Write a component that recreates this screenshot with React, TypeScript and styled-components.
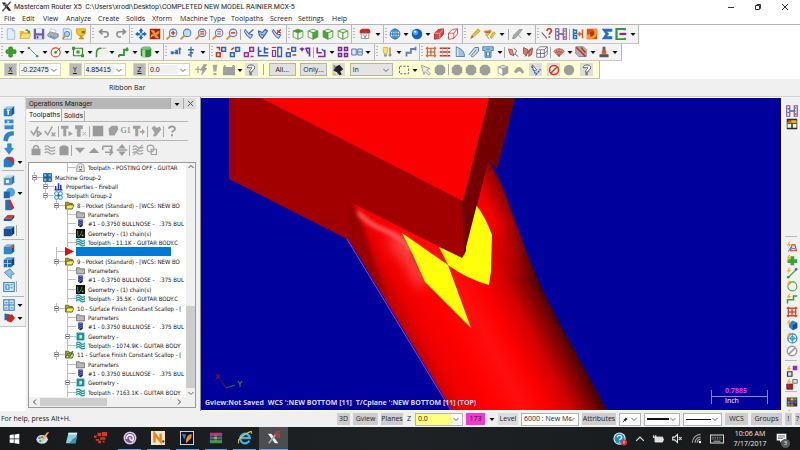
import React from "react";
import styled, { createGlobalStyle } from "styled-components";

const UI = '"Open Sans", "Noto Sans", sans-serif';
const TAHOMA = '"DejaVu Sans Condensed", "DejaVu Sans", sans-serif';

const GlobalStyle = createGlobalStyle`
  *, *::before, *::after { box-sizing: border-box; }
  body { margin: 0; background: #fff; font-family: ${UI}; font-size: 7px; line-height: 10px; color: #222; }
  button, input, select { font: inherit; color: inherit; margin: 0; padding: 0; border: 0; border-radius: 0; background: none; }
  ul { list-style: none; margin: 0; padding: 0; }
`;

/* ---------- icon artwork, drawn on a 16 x 16 grid ---------- */

const magnifier = (lens: string, mark: React.ReactNode) => (
  <>
    <path d="M6 10 1.500 14.500" stroke="#e0952a" strokeWidth="2.600" strokeLinecap="round" />
    <circle cx="9.500" cy="6.500" r="5" fill={lens} stroke="#5f7fae" strokeWidth="1.400" />
    {mark}
  </>
);

const wireCube = (top: string, front: string, side: string, line: string) => (
  <g stroke={line} strokeWidth="1.100" strokeLinejoin="round">
    <path d="M1.500 4 8 1.500 14.500 4 8 6.500z" fill={top} />
    <path d="M1.500 4 8 6.500V15L1.500 12z" fill={front} />
    <path d="M14.500 4 8 6.500V15l6.500-3z" fill={side} />
  </g>
);

const solidCube = (a: string, b: string, c: string) => (
  <>
    <path d="M1 5 5 1.500h10L11 5z" fill={a} />
    <path d="M1 5h10v10H1z" fill={b} />
    <path d="M11 5l4-3.500V11l-4 4z" fill={c} />
  </>
);

const blocks = (a: string, b: string, extra: string) => (
  <>
    <path d="M2 9h5v5H2z" fill="none" stroke={a} strokeWidth="2" />
    <path d="M9 2h5v5H9z" fill="none" stroke={b} strokeWidth="2" />
    <path d={extra} fill="none" stroke="#d0321c" strokeWidth="2" />
  </>
);

const spark = <path d="M4 1 1 6h3L2 10l5-6H4l2-3z" fill="#f2b01e" />;

const art: Record<string, React.ReactNode> = {
  app: (
    <>
      <path d="M1 2h5l9 12h-4z" fill="#222" />
      <path d="M14 1 2 15" stroke="#555" strokeWidth="2" />
      <path d="M3 7l4-5 2 4z" fill="#777" />
    </>
  ),
  newFile: <path d="M3 1h7l3 3v11H3z M10 1v3h3" fill="#dcefff" stroke="#8fb0d2" />,
  open: (
    <>
      <path d="M1 4h5l1 2h7v8H1z" fill="#e7b72c" />
      <path d="M4 7h12l-3 7H1z" fill="#ffe066" stroke="#b98d17" strokeWidth=".6" />
      <path d="M8 4c1-3 4-3 5 0l1.500-1v4H11l1-1.500C11 3.500 9.500 3.500 8 4z" fill="#3e9a35" />
    </>
  ),
  save: (
    <>
      <path d="M1 1h14v14H1z" fill="#6a5fc0" />
      <path d="M4 1h8v6H4z" fill="#eeeefa" />
      <path d="M4 10h8v5H4z" fill="#d8d8ee" />
      <path d="M5 11h2v3H5z" fill="#40388a" />
    </>
  ),
  print: (
    <>
      <path d="M5 1l7 2-1 5-8-2z" fill="#fff" stroke="#8aa" strokeWidth=".7" />
      <path d="M1 8l4-3 10 3v4l-5 3-9-4z" fill="#a5afb9" stroke="#667" strokeWidth=".7" />
      <path d="M4 11l7 2" stroke="#5b90c9" strokeWidth="1.500" />
    </>
  ),
  preview: (
    <>
      <path d="M3 1h8l3 3v11H3z" fill="#dcecfb" stroke="#7f9fc2" />
      <circle cx="8" cy="8" r="3.500" fill="#a9d3f7" stroke="#4f7fb5" strokeWidth="1.200" />
      <path d="M5 11l-3 4" stroke="#cf8a2c" strokeWidth="2" />
    </>
  ),
  trophy: (
    <>
      <path d="M2 1h12v4c0 4-3 5-5 6H7C5 10 2 9 2 5z" fill="#f6c50e" stroke="#a87a05" strokeWidth=".7" />
      <path d="M7 10h3v3h2v2H5v-2h2z" fill="#c99207" />
      <path d="M9 4h4v3H9z" fill="#8a6408" />
    </>
  ),
  undo: <path d="M3 5h7a3.500 3.500 0 010 7H8M6 1.500 2 5l4 3.500" fill="none" stroke="#8d8d8d" strokeWidth="2.200" />,
  redo: <path d="M13 5H6a3.500 3.500 0 000 7h2M10 1.500 14 5l-4 3.500" fill="none" stroke="#8d8d8d" strokeWidth="2.200" />,
  pan: (
    <>
      <path d="M8 0l3 4H9.500v2.500H12V5l4 3-4 3V9.500H9.500V12H11l-3 4-3-4h1.500V9.500H4V11L0 8l4-3v1.500h2.500V4H5z" fill="#1668c9" />
      <circle cx="8" cy="8" r="2" fill="#8fd0ff" />
    </>
  ),
  repaint: (
    <>
      <path d="M1 1h14v14H1z" fill="#a6200e" />
      <path d="M2 3q6-2 6 4l6-4q0 6-4 6l4 5q-7 0-7-4l-5 3q0-6 4-5z" fill="#f39a20" />
    </>
  ),
  zoomIn: magnifier("#e8f1fb", <path d="M9.500 3.500v6M6.500 6.500h6" stroke="#c8321f" strokeWidth="1.800" />),
  zoomFit: magnifier("#b9def8", null),
  zoomRed: magnifier("#f3d7d5", <path d="M7 5h5M7 8h5" stroke="#c8321f" strokeWidth="1.600" />),
  zoomPct: magnifier("#eceef6", <path d="M7 5h5M7 8h5" stroke="#b04a77" strokeWidth="1.300" />),
  zoomOut: magnifier("#f6e6e1", <path d="M6.500 6.500h6" stroke="#c8321f" strokeWidth="1.800" />),
  rotate: (
    <>
      <path d="M3 2l5 6 5 1-3 5-4-3-4-6z" fill="#b7cfea" stroke="#3a5f97" strokeWidth="1.300" />
      <path d="M8 7l6-5" stroke="#3a5f97" strokeWidth="1.500" />
    </>
  ),
  rotateAll: (
    <>
      <path d="M2 4l5 2 4-4 3 2-4 6-3 4-4-4z" fill="#9fc0e4" stroke="#2f568f" strokeWidth="1.400" />
      <path d="M5 8l5 2" stroke="#2f568f" />
    </>
  ),
  rotateOff: (
    <>
      <path d="M3 2l5 6 5 1-3 5-4-3-4-6z" fill="#b7cfea" stroke="#3a5f97" strokeWidth="1.300" />
      <path d="M8 7l5-5M8 3l5 4" stroke="#c8321f" strokeWidth="1.800" />
    </>
  ),
  cubeTop: wireCube("#3f9a2c", "#eef8ea", "#eef8ea", "#4f9a3c"),
  cubeFront: wireCube("#eef8ea", "#eef8ea", "#4fa13a", "#4f9a3c"),
  cubeRight: wireCube("#eef8ea", "#4fa13a", "#eef8ea", "#4f9a3c"),
  cubeIso: wireCube("#eef8ea", "#eef8ea", "#eef8ea", "#4f9a3c"),
  gview: (
    <>
      <path d="M1 3l3-2h9l2 2v4H1z" fill="#c92b2b" />
      <path d="M3 7h10v7H3z" fill="#fff" stroke="#777" />
      <path d="M6 9l2 4 2-4" fill="none" stroke="#c92b2b" />
    </>
  ),
  globe: (
    <g fill="none" stroke="#2272b8" strokeWidth="1.300">
      <circle cx="8" cy="8" r="6.500" fill="#e2f1fb" />
      <ellipse cx="8" cy="8" rx="3" ry="6.500" />
      <path d="M1.500 8h13M3 4h10M3 12h10M8 1v14" />
    </g>
  ),
  sphere: (
    <>
      <circle cx="8" cy="8" r="7" fill="#1260b8" />
      <circle cx="6" cy="6" r="3.500" fill="#4f9fe8" />
      <circle cx="5.500" cy="5" r="1.500" fill="#d3ecff" />
    </>
  ),
  redSolid: (
    <>
      <path d="M2 7l5-5 7-1v7l-5 6-7 1z" fill="#dd4545" stroke="#a81d1d" />
      <path d="M2 7h7v7M9 7l5-6" fill="none" stroke="#ffc6c6" />
    </>
  ),
  redWire: <path d="M2 7l5-5 7-1v7l-5 6-7 1zM2 7h7v7M9 7l5-6" fill="#fff4f4" stroke="#d04848" strokeWidth="1.200" />,
  pencil: (
    <>
      <path d="M2 14l2-4 8-9 3 3-9 8z" fill="#eac528" stroke="#a3780a" strokeWidth=".7" />
      <path d="M2 14l2-4 2 2z" fill="#c4571a" />
    </>
  ),
  pencils: (
    <>
      <path d="M2 9l6-7 2 2-6 7zM8 12l5-7 2 2-5 7z" fill="#eac528" stroke="#a3780a" strokeWidth=".7" />
      <path d="M1 4h7v2H1zM4 11l3 4" stroke="#c4571a" fill="#d69a1a" />
    </>
  ),
  eraser: <path d="M2 14l2-5 7-7h4l-6 8-4 4zM10 9l3 4" fill="#aaa" stroke="#8a8a8a" />,
  query: (
    <>
      <path d="M1 6l7 8" stroke="#555" strokeWidth="1.500" />
      <path d="M8 4c0-4 6-4 6 0 0 2-3 2-3 5M11 11v2" fill="none" stroke="#dc3a20" strokeWidth="2.300" />
    </>
  ),
  levels: (
    <>
      <path d="M1 1h4v14H1zM11 1h4v14h-4z" fill="#fff" stroke="#8045a8" strokeWidth="1.500" />
      <path d="M12 3h2v2h-2z" fill="#3aa83a" /><path d="M12 7h2v2h-2z" fill="#e3a220" /><path d="M12 11h2v2h-2z" fill="#d0321c" />
      <path d="M2 5h2M2 10h2M5 8h6" stroke="#2f6fc0" strokeWidth="2" />
    </>
  ),
  analyze: (
    <>
      <path d="M2 1v14M2 3h4v4H2M2 10h4v4H2" fill="none" stroke="#1f74c8" strokeWidth="2" />
      <path d="M7 8h6M14 2v12M10 5v6" stroke="#e8641c" strokeWidth="2.200" />
    </>
  ),
  ramp: (
    <>
      <path d="M1 1h14v14H1z" fill="#e0500f" />
      <path d="M1 15V9q7 0 9-8h5v6q-2 7-8 8z" fill="#f79a2c" />
      <path d="M5 6l6-3v6l-5 3z" fill="#b93208" />
    </>
  ),
  sigma: <path d="M1 1h14v4H8l3 3-3 3h7v4H1l5-7z" fill="#1e6fc6" />,
  convert: (
    <>
      <path d="M13 3V1H2v14h11v-2" fill="none" stroke="#37963a" strokeWidth="3" />
      <path d="M6 8h9" stroke="#7b2b93" strokeWidth="3" />
    </>
  ),
  plus: <path d="M5 2q3-2 5 0v3h4q2 3 0 5h-4v4q-3 2-5 0v-4H2Q0 8 2 5h3z" fill="#3aa02c" stroke="#1f7a18" strokeWidth=".8" />,
  line: (
    <>
      <path d="M2 2l12 12" stroke="#6d8f9f" strokeWidth="1.300" />
      <circle cx="2.500" cy="2.500" r="1.600" fill="#3a9a33" /><circle cx="13.500" cy="13.500" r="1.600" fill="#3a9a33" />
    </>
  ),
  circle: (
    <>
      <circle cx="7.500" cy="8.500" r="6" fill="none" stroke="#d24a2b" strokeWidth="1.500" />
      <path d="M7.500 8.500 14 2" stroke="#d24a2b" strokeWidth="1.300" />
      <circle cx="7.500" cy="8.500" r="1.800" fill="#2f9a2b" />
    </>
  ),
  rect: (
    <>
      <path d="M2 3h12v10H2z" fill="none" stroke="#2f8f2b" strokeWidth="1.500" />
      <path d="M0 1h4v4H0zM12 11h4v4h-4zM6 6h4v4H6z" fill="#2f9a2b" />
    </>
  ),
  fillet: (
    <>
      <path d="M2 15V9q0-6 6-6" fill="none" stroke="#2f9a2b" strokeWidth="2" />
      <path d="M8 3h7" stroke="#888" strokeWidth="1.300" strokeDasharray="2 1" />
    </>
  ),
  spline: <path d="M1 12h7V5h6M1 12v3M12 2v5" fill="none" stroke="#2f9a2b" strokeWidth="2.400" />,
  prism: (
    <>
      <path d="M1 3l4-2h8l2 2v10l-3 2H4l-3-2z" fill="#2e8b34" />
      <path d="M3 5h4v10H3z" fill="#a5dca0" />
      <path d="M1 3l4-2h8l2 2-3 2H3z" fill="#7cc47c" />
    </>
  ),
  drafting: (
    <>
      <path d="M1 7h4v4H1zM7 5h4v6H7z" fill="#2f72bb" />
      <path d="M5 9h3M13 2v9M11 4h4" stroke="#31568c" strokeWidth="1.600" />
    </>
  ),
  dimension: <path d="M8 1v14M4 5h8M6 9h5M4 12h3" stroke="#3b6db2" strokeWidth="1.800" fill="none" />,
  xfA: blocks("#d0321c", "#2b62c4", "M2 2h4v4"),
  xfB: blocks("#2b62c4", "#2b62c4", "M3 5l4-3"),
  xfC: blocks("#9b2aa0", "#9b2aa0", "M10 14h4"),
  xfD: <path d="M2 1v13M1 7h5M1 13h14M10 1v8h5M10 4h5" fill="none" stroke="#3454c0" strokeWidth="2" />,
  xfE: (
    <>
      <path d="M9 2h5v12H9z" fill="none" stroke="#2b62c4" strokeWidth="1.800" />
      <path d="M2 6h4v8H2z" fill="none" stroke="#a02a90" strokeWidth="1.600" />
      <path d="M1 2h6" stroke="#d0321c" strokeWidth="1.500" />
    </>
  ),
  xfF: blocks("#2b62c4", "#2b62c4", "M10 12h5M3 4h3"),
  xfG: <path d="M1 4h6M4 2v5M9 3h5v11M9 3l3 7" fill="none" stroke="#6a2bb0" strokeWidth="2.200" />,
  xfH: (
    <>
      <path d="M3 2v7h6M13 5v9H4" fill="none" stroke="#8a2aa8" strokeWidth="2.200" />
      <path d="M9 4l4 4" stroke="#2b62c4" strokeWidth="1.500" />
    </>
  ),
  xfI: <path d="M2 2h4v4H2zM10 2h4v4h-4zM2 10h4v4H2zM10 10h4v4h-4z" fill="none" stroke="#7a2090" strokeWidth="2" />,
  xfJ: <path d="M1 4h6v8H1zM9 8h6M9 4h6v8H9z" fill="#dfe9f8" stroke="#4a77b5" strokeWidth="1.300" />,
  bulb: (
    <>
      <path d="M3 2h6v6L8 10H4L3 8z" fill="#fbe25a" stroke="#c8a21c" strokeWidth=".8" />
      <path d="M4 11h4v3H4z" fill="#999" />
      <path d="M12 2v12M10 12h4" stroke="#7a6f3a" strokeWidth="1.500" />
    </>
  ),
  bend: <path d="M2 14V9h6V4h6M14 1v5" fill="none" stroke="#6f78b5" strokeWidth="2.400" />,
  mesh: <path d="M3 1v14M13 1v14M1 3h14M1 13h14M8 3v10M3 8h10" fill="none" stroke="#d2581e" strokeWidth="1.500" />,
  meshRows: (
    <>
      <path d="M1 3h14M1 8h14M1 13h14" stroke="#c22c20" strokeWidth="1.700" />
      <path d="M5 1v14M11 1v14" stroke="#c8a38c" strokeWidth="1.400" />
    </>
  ),
  surf: (
    <>
      <path d="M3 1v13h4V3z" fill="#d6e8f7" stroke="#38699b" />
      <path d="M7 3q7 3 7 11H7" fill="#9cc5e6" stroke="#38699b" />
    </>
  ),
  sweep: <path d="M1 12 9 2h5v5L6 15 4 13l7-8" fill="#c8def2" stroke="#45729f" strokeWidth="1.200" />,
  boxSurf: (
    <>
      <path d="M1 1h14v5h-3v9H4V6H1z" fill="#9cc5e6" stroke="#2f5f90" />
      <path d="M5 4h6M6 8h4v5H6z" fill="#e8f4ff" stroke="#2f5f90" />
    </>
  ),
  trimSurf: (
    <>
      <path d="M2 4l5 1 2 8-5-2z" fill="#e2887c" stroke="#b5382b" />
      <path d="M9 3l4 3-3 6M11 11l4 3" fill="none" stroke="#666" strokeWidth="1.200" />
    </>
  ),
  trimSurf2: (
    <>
      <path d="M2 2l6 3-2 8-4-3zM9 6l5-3-1 8-4 3z" fill="#d77b6f" stroke="#a83327" />
      <path d="M4 14l9-12" stroke="#555" />
    </>
  ),
  wireBox: <path d="M1 5h10v10H1zM1 5l4-4h10L11 5M15 1v10l-4 4M6 5v10M1 10h10l4-4" fill="#fff" stroke="#556" />,
  fan: (
    <>
      <path d="M8 14 1 7q7-7 14 0z" fill="#e2a193" stroke="#a8382b" />
      <path d="M8 14V4M8 14 4 5M8 14l4-9M3 9q5-4 10 0" fill="none" stroke="#a8382b" strokeWidth=".8" />
    </>
  ),
  clipPlane: (
    <>
      <path d="M1 1h10l4 4v9H5l-4-4z" fill="#b9b1ae" stroke="#777" />
      <path d="M2 2l12 12M8 2l6 7" stroke="#b72e22" strokeWidth="2" />
    </>
  ),
  endmill: (
    <>
      <path d="M6 1h4v6H6z" fill="#666" />
      <path d="M5 6h6v5H5z" fill="#e05a28" />
      <path d="M2 11h12v4H2z" fill="#555" />
    </>
  ),
  fastPoint: <path d="M4 3v9M0 7h8M12 1 8 8h3l-2 6 6-8h-3l3-5z" fill="#a0a0a0" stroke="#a0a0a0" strokeWidth="1.600" />,
  bang: <path d="M5 1h6l-1 9H6zM6 12h4v3H6z" fill="#a8a8a8" />,
  wideTool: <path d="M0 5q1-4 3-4l1 3h8l1-3q3 0 3 4v10H0z" fill="#a0a0a0" />,
  help: (
    <>
      <path d="M3 5c0-5 10-5 10 0 0 3-4 3-4 6H6c0-4 3-4 3-6 0-1-2-1-2 0z" fill="#fff" stroke="#555" strokeWidth="1.300" />
      <path d="M6 12h3v3H6z" fill="#777" />
    </>
  ),
  pickCursor: (
    <>
      <path d="M2 1v9l3-2 3 6 3-1-3-6h4z" fill="#888" />
      <path d="M6 3l4-2 5 6-4 3 2 4-3 1-3-4-5-2z" fill="#222" />
      <path d="M1 12l4 3" stroke="#e2b53a" strokeWidth="2" />
    </>
  ),
  marquee: <path d="M2 3h12v10H2z" fill="none" stroke="#666" strokeWidth="1.300" strokeDasharray="3 2" />,
  arrowGrey: <path d="M2 2l11 4-4 2 5 5-2 2-5-5-2 4z" fill="#eee" stroke="#999" strokeWidth="1.200" />,
  hexagon: <path d="M5 1h6l4 4v6l-4 4H5l-4-4V5z" fill="#9d9d9d" />,
  halfCube: wireCube("#ddd", "#fff", "#a0a0a0", "#999"),
  chevronUp: <path d="M1 11q7-14 14 0l-3 2q-3-6-7-1z" fill="#a0a0a0" />,
  verify: (
    <>
      <path d="M2 3l6 11 6-7" fill="none" stroke="#2f62b0" strokeWidth="1.800" strokeDasharray="3 1" />
      <path d="M3 1l6 7-4 1z" fill="#fff" stroke="#555" />
    </>
  ),
  forbid: (
    <>
      <circle cx="8" cy="8" r="6" fill="#fbe9e6" stroke="#d23a22" strokeWidth="2" />
      <path d="M12 4 4 12" stroke="#d23a22" strokeWidth="2" />
    </>
  ),
  disc: <circle cx="8" cy="8" r="7" fill="#9d9d9d" />,
  /* left toolbar */
  extrude: (
    <>
      {solidCube("#8ccaf5", "#1f7fd0", "#1259a0")}
      <path d="M5 7h4M7 7v6" stroke="#fff" strokeWidth="2" />
    </>
  ),
  revolve: (
    <>
      <path d="M2 2h12v5H2zM2 9h12v6H2z" fill="#2f8bd8" />
      <path d="M3 7h9v3H3z" fill="#bfe2fb" /><path d="M6 3l3 2-3 2" fill="#fff" />
    </>
  ),
  sweepBlue: <path d="M1 14C1 6 5 2 14 2v5c-5 0-7 2-8 8z" fill="#2386d9" stroke="#1464ac" strokeWidth=".6" />,
  loft: <path d="M6 1h5v6h3l-6 8-6-8h4z" fill="#2a90e2" stroke="#1464ac" strokeWidth=".6" />,
  filletSolid: (
    <>
      <path d="M1 5l4-4h6q4 1 4 5v5l-4 4H1z" fill="#1f7fd0" />
      <path d="M5 2h5q5 0 5 6l-4 3q0-6-6-6z" fill="#d8281f" />
    </>
  ),
  shell: (
    <>
      {solidCube("#b4daf5", "#5aa5de", "#2b76b8")}
      <path d="M3 7h6v6H3z" fill="#e4f3fd" stroke="#1c5a94" />
    </>
  ),
  boolean: (
    <>
      <circle cx="10" cy="7" r="6" fill="#4da3e6" />
      <path d="M1 6h8v9H1z" fill="#1766b4" />
    </>
  ),
  draft: (
    <>
      <path d="M3 1h6l5 10-4 4H3z" fill="#1f70c2" />
      <path d="M7 1h3l5 11-4 3z" fill="#cf2d25" />
    </>
  ),
  thicken: (
    <>
      <path d="M1 9l5-5h9l-4 5z" fill="#d8392e" /><path d="M1 9h10v3H1z" fill="#1a5ca5" /><path d="M11 9l4-5v3l-4 5z" fill="#103f75" />
    </>
  ),
  block: solidCube("#4d9ade", "#154f97", "#0d376b"),
  extract: (
    <>
      {solidCube("#7bb9ea", "#2f86d3", "#175ca0")}
      <path d="M6 8l8-7v5z" fill="#e2572b" />
    </>
  ),
  gridBlock: (
    <>
      {solidCube("#5aa1df", "#1f66b0", "#12457e")}
      <path d="M6 5v10M1 10h10" stroke="#bfe0f8" />
    </>
  ),
  foldBlock: <path d="M2 6l7-5 6 7-4 1v5L5 9z" fill="#8cc3ee" stroke="#2f77b8" />,
  drawing: (
    <>
      <path d="M1 2h14v12H1z" fill="#d4eafa" stroke="#3b86c5" strokeWidth="1.500" />
      <path d="M4 5h4v6H4zM10 5h3M10 9h3" fill="none" stroke="#3b86c5" strokeWidth="1.500" />
    </>
  ),
  views: <path d="M1 1h14v14H1zM8 1v14M1 8h14M3 5h3M10 5h3M3 12h3M10 12h3" fill="#cfe6f8" stroke="#3b7db8" strokeWidth="1.400" />,
  redBlue: (
    <>
      <path d="M2 2l7 1 1 7-8 1z" fill="#2468b4" /><path d="M6 5l6-2 4 5-5 6-6-2z" fill="#d2241c" />
    </>
  ),
  /* right toolbar */
  colorMap: (
    <>
      <path d="M1 1h14v14H1z" fill="#2b2b2b" /><path d="M3 3h4v3H3z" fill="#e44b22" /><path d="M7 3h7v3H7z" fill="#f3c21a" />
      <path d="M2 8h5v5H2zM9 8h5v5H9z" fill="#f4f4d8" /><path d="M1 6h14v1H1z" fill="#f0e33a" />
    </>
  ),
  rOps: (
    <>
      {spark}
      <path d="M6 13l2-8h4l2 8z" fill="#f3d3d0" stroke="#d03a34" strokeWidth="1.400" />
      <path d="M3 14l5-8M8 10h5" stroke="#4a90c5" strokeWidth="1.500" />
    </>
  ),
  rPlus: (
    <>
      <path d="M6 3h5v4h4v5h-4v3H6v-3H2V7h4z" fill="#35a333" />
      {spark}
    </>
  ),
  rLine: (
    <>
      <path d="M3 14 14 3" stroke="#4f9a4c" strokeWidth="1.600" />
      {spark}
      <circle cx="13.500" cy="3" r="1.700" fill="#55a" /><circle cx="3" cy="13.500" r="1.700" fill="#3a9a33" />
    </>
  ),
  rCircle: (
    <>
      <circle cx="8.500" cy="8.500" r="6" fill="none" stroke="#4aa148" strokeWidth="1.400" />
      {spark}
    </>
  ),
  rSpline: (
    <>
      <path d="M2 14V9h8V4h5" fill="none" stroke="#3c9c3a" strokeWidth="2" />
      {spark}
    </>
  ),
  rMesh: <path d="M3 1v14M13 1v14M1 3h14M1 13h14M8 3v10M3 8h10" fill="#fff2e8" stroke="#dc4120" strokeWidth="1.700" />,
  rSolid: (
    <>
      <path d="M4 5l5-3 6 3v7l-6 3-5-4z" fill="#2f86d3" /><path d="M9 8l6-3v7l-6 3z" fill="#12508f" />
      {spark}
    </>
  ),
  rWheel: (
    <>
      <circle cx="8.500" cy="8.500" r="6" fill="#ddf0fb" stroke="#2f86c8" strokeWidth="1.600" />
      <circle cx="8.500" cy="8.500" r="2.500" fill="none" stroke="#2f86c8" strokeWidth="1.300" />
      <path d="M8.500 2v13M2 8.500h13" stroke="#2f86c8" />
      {spark}
    </>
  ),
  rForbid: (
    <>
      <circle cx="8" cy="8" r="6.300" fill="#f6f6f6" stroke="#999" strokeWidth="2" /><path d="M12.500 3.500l-9 9" stroke="#999" strokeWidth="2" />
    </>
  ),
  rSwapA: (
    <>
      <path d="M9 1h6v6H9z" fill="#8a2be2" /><path d="M2 9h6v6H2z" fill="#ddd" stroke="#333" strokeWidth="1.500" />
      {spark}
    </>
  ),
  rSwapB: (
    <>
      <path d="M9 2h6v5H9z" fill="#ddd" stroke="#555" /><path d="M1 8h8v7H1z" fill="#c4161c" stroke="#333" />
      {spark}
    </>
  ),
  palette: (
    <>
      <path d="M1 2h14v12H1z" fill="#333" /><path d="M2 3h3v3H2z" fill="#e33" /><path d="M6 3h4v3H6z" fill="#f5c518" /><path d="M11 3h3v3h-3z" fill="#2b8" />
      <path d="M2 7h3v3H2z" fill="#2bd" /><path d="M6 7h4v3H6z" fill="#d3b" /><path d="M11 7h3v3h-3z" fill="#36d" /><path d="M2 11h3v2H2z" fill="#6c3" />
      <path d="M6 11h4v2H6z" fill="#e73" />
    </>
  ),
  /* operations manager */
  selAll: <path d="M1 8l4 5 6-11M10 8v7l5-3.500z" fill="none" stroke="#a0a0a0" strokeWidth="2.200" />,
  selNone: <path d="M1 8l4 5 6-11M10 10l5 5M15 10l-5 5" fill="none" stroke="#a0a0a0" strokeWidth="2" />,
  regen: <path d="M0 1h10v4H7v10H3V5H0zM10 8l6 3.500-6 3.500z" fill="#a0a0a0" />,
  regenX: <path d="M0 1h10v4H7v10H3V5H0zM10 9l5 5M15 9l-5 5" fill="#a0a0a0" stroke="#a0a0a0" strokeWidth="1" />,
  square: <path d="M1 1h14v14H1z" fill="#9a9a9a" />,
  backplot: <path d="M2 5l4-4h8l1 5-5 8H3z" fill="#a0a0a0" />,
  postTool: <path d="M0 1h10v4H7v10H3V5H0zM9 8h3V5l4 4-4 4v-3H9z" fill="#a0a0a0" />,
  highFeed: <path d="M2 4l4-3 3 3 4-2 2 4-7 9H4l2-5z" fill="#a0a0a0" />,
  question: <path d="M4 5c0-4 8-4 8 0 0 3-4 3-4 5M8 12v3" fill="none" stroke="#9a9a9a" strokeWidth="2.400" />,
  lock: (
    <>
      <path d="M2 6h12v9H2z" fill="#9a9a9a" /><path d="M5 6V4q3-4 6 0v2" fill="none" stroke="#9a9a9a" strokeWidth="2" />
    </>
  ),
  waves: <path d="M1 4q3-3 6 0t8 0M1 8q3-3 6 0t8 0M1 12q3-3 6 0t8 0" fill="none" stroke="#a0a0a0" strokeWidth="1.600" />,
  ghost: <path d="M2 4q6-5 12 0v11H2z" fill="#9a9a9a" />,
  down: <path d="M1 5h14l-7 7z" fill="#9a9a9a" />,
  up: <path d="M1 12h14L8 5z" fill="#9a9a9a" />,
  insert: <path d="M1 3h12v8M4 11h9M10 7l4 4-4 4M1 3v5" fill="none" stroke="#9a9a9a" strokeWidth="2" />,
  scrollTo: <path d="M8 0l5 6H3zM8 16l5-6H3zM1 7h14v2H1z" fill="#9a9a9a" />,
  wavesOff: <path d="M1 4q3-3 6 0t8 0M1 8q3-3 6 0t8 0M1 12q3-3 6 0t8 0M2 15 14 1" fill="none" stroke="#a0a0a0" strokeWidth="1.500" />,
  rings: (
    <g fill="none" stroke="#a0a0a0" strokeWidth="1.500">
      <circle cx="6" cy="6" r="4.500" /><path d="M7 7h7v7H7z" />
    </g>
  ),
  /* tree */
  ghostIcon: (
    <>
      <path d="M2 4q6-6 12 0l1 11H1z" fill="#e5e5e5" stroke="#666" /><path d="M5 6h2v2H5zM9 6h2v2H9zM6 11h4v2H6z" fill="#333" />
    </>
  ),
  machine: (
    <>
      <path d="M1 1h6v6H1zM9 1h6v6H9zM1 9h6v6H1zM9 9h6v6H9z" fill="#5cc0ee" stroke="#124e93" strokeWidth="1.500" />
      <path d="M8 0v16M0 8h16" stroke="#123" strokeWidth="1" />
    </>
  ),
  props: <path d="M1 14h14M3 14V7M8 14V2M12 14V5" stroke="#1f2fc0" strokeWidth="2.600" />,
  group: (
    <>
      <path d="M4.500 1a3.500 3.500 0 010 7 3.500 3.500 0 010-7zM11.500 1a3.500 3.500 0 010 7 3.500 3.500 0 010-7zM4.500 8a3.500 3.500 0 010 7 3.500 3.500 0 010-7zM11.500 8a3.500 3.500 0 010 7 3.500 3.500 0 010-7z" fill="#d6f1fb" stroke="#2a86bd" strokeWidth="1.600" />
      <circle cx="8" cy="8" r="1.500" fill="#124e93" />
    </>
  ),
  folderOpen: (
    <>
      <path d="M1 2h5l1 2h6v10H1z" fill="#b8a21a" stroke="#222" /><path d="M4 7h12l-3 7H1z" fill="#fff23a" stroke="#222" />
    </>
  ),
  folderCheck: (
    <>
      <path d="M1 2h5l1 2h6v10H1z" fill="#b8a21a" stroke="#222" /><path d="M4 7h12l-3 7H1z" fill="#e9e03a" stroke="#222" />
      <path d="M4 7l4 5 6-10" fill="none" stroke="#1d8a8a" strokeWidth="2.500" />
    </>
  ),
  folder: <path d="M1 3h5l1 2h8v9H1z" fill="#b9b9b9" stroke="#555" strokeWidth="1.200" />,
  tool: (
    <>
      <path d="M4 1h8v10q-4 7-8 0z" fill="#161a8c" /><path d="M5 4l6-2M5 8l6-3M5 12l6-4" stroke="#c9d1ff" strokeWidth="1" />
    </>
  ),
  geometry: (
    <>
      <path d="M0 0h16v16H0z" fill="#111" /><path d="M3 3v9q0 2 3 1l4-6V3" fill="none" stroke="#3fae3f" strokeWidth="1.500" /><path d="M12 10v3" stroke="#e6d83a" strokeWidth="2" />
    </>
  ),
  geometrySurf: (
    <>
      <path d="M1 1h14v14H1z" fill="#1a9ba5" /><path d="M4 4h8v9H4z" fill="#5cd9da" stroke="#0a5560" /><path d="M7 6h3v4H7z" fill="#d9ffff" />
    </>
  ),
  toolpath: (
    <>
      <path d="M0 1h16v14H0z" fill="#d6efee" /><path d="M0 4q4-4 8 0t8 0M0 8q4-4 8 0t8 0M0 12q4-4 8 0t8 0" fill="none" stroke="#2a9292" strokeWidth="2" />
    </>
  ),
  /* taskbar */
  windows: <path d="M1 3l6-1v6H1zM8 2l7-1v7H8zM1 9h6v5.500L1 14zM8 9h7v7l-7-1z" fill="#fff" />,
  paint: (
    <>
      <ellipse cx="7" cy="9.500" rx="6.500" ry="5" fill="#cfe0ea" /><circle cx="4" cy="8" r="1.400" fill="#3f9ae0" /><circle cx="7" cy="7" r="1.400" fill="#e44b3a" /><circle cx="5" cy="11.500" r="1.400" fill="#50b04c" />
      <path d="M8 12l7-11-3 1-5 8z" fill="#e6b25a" />
    </>
  ),
  notepad: (
    <>
      <path d="M4 2h10l-2 12H1z" fill="#8ecbdc" /><path d="M4 2h10l-.5 2H3.500z" fill="#dff0f5" /><path d="M9 9l5-3-2 8H5z" fill="#3d8fa8" />
    </>
  ),
  redBlocks: <path d="M0 5h3v3H0zM4 2h4v4H4zM9 1h6v5H9zM2 9h4v2H2zM7 7h6v3H7zM5 11h3v3H5zM10 11h2v2h-2z" fill="#d2352a" />,
  swirl: (
    <>
      <circle cx="8" cy="8" r="7.500" fill="#7a52a5" /><circle cx="8" cy="8" r="6.500" fill="none" stroke="#ddd0ee" strokeWidth="1.400" />
      <path d="M4 9a4 4 0 117 2 3 3 0 01-3-4" fill="none" stroke="#fff" strokeWidth="1.800" />
    </>
  ),
  letterN: (
    <>
      <path d="M0 0h16v16H0z" fill="#f4e4c8" /><path d="M4 13V3l7 9V3" fill="none" stroke="#e08a1e" strokeWidth="2.800" /><circle cx="14" cy="12" r="1.300" fill="#333" />
    </>
  ),
  space: (
    <>
      <path d="M0 0h16v16H0z" fill="#e8e8e8" /><path d="M1 1h14v14H1z" fill="#0c1428" /><path d="M7 14q-2-8 6-11 1 5-2 7z" fill="#f08a2a" /><path d="M2 3l5 1-2 6z" fill="#3d7fb8" />
    </>
  ),
  books: (
    <>
      <path d="M1 2h14v4H1z" fill="#b23a7a" /><path d="M1 6h14v4H1z" fill="#3a62b8" /><path d="M1 10h14v4H1z" fill="#3f9a48" /><path d="M6 5h3v6H6z" fill="#c9a13b" />
      <path d="M2 6h12M2 10h12" stroke="#2a2a33" strokeWidth=".8" />
    </>
  ),
  ie: (
    <>
      <path d="M13 11a5.500 5.500 0 11.500-3H4" fill="none" stroke="#42b4ea" strokeWidth="2.600" /><path d="M1 14Q-2 10 8 4t7-1" fill="none" stroke="#f2c632" strokeWidth="1.300" />
    </>
  ),
  x5: (
    <>
      <path d="M1 3h4l8 11H9z" fill="#eee" /><path d="M10 4 2 14" stroke="#aaa" strokeWidth="2" /><path d="M10 1h5M10 1v3h4v3h-4" fill="none" stroke="#d83434" strokeWidth="1.500" />
    </>
  ),
  helpBadge: (
    <>
      <circle cx="7.500" cy="7.500" r="7" fill="#e9f6ff" /><circle cx="7.500" cy="7.500" r="5.800" fill="#1c8dc8" />
      <path d="M5 6c0-3 5-3 5 0 0 2-2.500 1.500-2.500 3.500M7.500 11v1" fill="none" stroke="#fff" strokeWidth="1.500" /><circle cx="12.500" cy="12" r="3.500" fill="#e0322c" /><path d="M12.500 10v3" stroke="#fff" />
    </>
  ),
  caret: <path d="M2 11l6-6 6 6" fill="none" stroke="#eee" strokeWidth="1.700" />,
  battery: (
    <>
      <path d="M3 6h11v7H3zM15 8v3" fill="#ddd" stroke="#eee" strokeWidth="1.400" /><path d="M1 3v4M4 3v4M0 6h5" stroke="#fff" strokeWidth="1.300" />
    </>
  ),
  mute: <path d="M1 6h3l4-4v12L4 10H1zM10 6l4 4M14 6l-4 4" fill="none" stroke="#eee" strokeWidth="1.500" />,
  wifi: (
    <>
      <path d="M2 14A12 12 0 0114 2M6 14a8 8 0 018-8M9 14a5 5 0 015-5" fill="none" stroke="#aaa" strokeWidth="1.600" /><circle cx="13" cy="13" r="1.800" fill="#fff" />
    </>
  ),
  keyboard: (
    <>
      <path d="M.5 3.500h15v9H.5z" fill="none" stroke="#ddd" strokeWidth="1.200" />
      <path d="M2 6h12M2 8h12" stroke="#ccc" strokeWidth="1" strokeDasharray="1 1" /><path d="M4 10.500h8" stroke="#ccc" />
    </>
  ),
  note: (
    <>
      <path d="M1 1h14v10H9l-3 3v-3H1z" fill="#fff" /><path d="M3 4h10M3 6h10M3 8h7" stroke="#444" strokeWidth=".9" />
    </>
  ),
};

const Glyph = styled.svg<{ $s: number }>`
  display: block;
  flex: none;
  width: ${(p) => p.$s}px;
  height: ${(p) => p.$s}px;
`;
const Icon = ({ name, size = 12 }: { name: string; size?: number }) => (
  <Glyph $s={size} viewBox="0 0 16 16" fill="none" aria-hidden="true">{art[name]}</Glyph>
);
const Chevron = () => (
  <Glyph $s={8} viewBox="0 0 8 8" aria-hidden="true"><path d="M1.500 3 4 5.500 6.500 3" fill="none" stroke="#666" /></Glyph>
);
const Triangle = () => (
  <Glyph $s={6} viewBox="0 0 6 6" aria-hidden="true"><path d="M.5 2h5L3 5z" fill="#111" /></Glyph>
);

/* ---------- shell ---------- */

const Shell = styled.div`
  display: flex;
  flex-direction: column;
  height: 100vh;
  min-height: 450px;
  overflow: hidden;
`;
const TitleBar = styled.header`
  display: flex;
  align-items: center;
  gap: 2px;
  height: 13px;
  flex: none;
  padding: 0 5px 0 1px;
`;
const Title = styled.h1`
  flex: 1;
  margin: 0;
  font-family: Roboto, ${UI};
  font-size: 7px;
  font-weight: 400;
  white-space: pre;
`;
const WindowButton = styled.button`
  display: grid;
  place-items: center;
  width: 20px;
  height: 12px;
  margin-left: 5px;
`;
const MenuBar = styled.nav`
  display: flex;
  gap: 8px;
  height: 12px;
  flex: none;
  padding: 1px 4px 0;
  border-bottom: 1px solid #b4b4b4;
`;
const MenuItem = styled.button<{ $w: number }>`
  width: ${(p) => p.$w}px;
  text-align: left;
  white-space: nowrap;
`;
const ToolRow = styled.div<{ $h: number }>`
  display: flex;
  height: ${(p) => p.$h}px;
  flex: none;
`;
const Group = styled.div<{ $w: number }>`
  display: flex;
  align-items: center;
  justify-content: space-between;
  width: ${(p) => p.$w}px;
  flex: none;
  padding: 0 2px 0 1px;
  background: #f3f3f3;
  border-right: 1px solid #b8b8b8;
  border-bottom: 1px solid #c4c4c4;
`;
const Grip = styled.span`
  width: 2px;
  height: 12px;
  background: repeating-linear-gradient(#b9b9b9 0 1px, transparent 1px 3px);
`;
const Rule = styled.span`
  width: 1px;
  height: 11px;
  background: #a8a8a8;
`;
const ToolButton = styled.button<{ $framed?: boolean }>`
  display: grid;
  place-items: center;
  width: 13px;
  height: 13px;
  flex: none;
  background: ${(p) => (p.$framed ? "#dcdcdc" : "none")};
`;
const DropButton = styled.button`
  display: grid;
  place-items: center;
  width: 7px;
  height: 13px;
`;

const Tools = ({ items }: { items: string[] }) => (
  <>
    {items.map((t, i) =>
      t === "|" ? <Rule key={i} /> :
      t === "v" ? <DropButton key={i} aria-label="More"><Triangle /></DropButton> :
      t === ":" ? <Grip key={i} /> :
      <ToolButton key={i} aria-label={t}><Icon name={t} /></ToolButton>
    )}
  </>
);

const split = (s: string) => s.split(" ");
const row1: [number, string][] = [
  [91, ": newFile open save print preview trophy"],
  [39, ": undo redo"],
  [157, ": pan repaint | zoomIn zoomFit zoomRed | zoomPct zoomOut | rotate rotateAll rotateOff"],
  [65, ": cubeTop cubeFront cubeRight cubeIso"],
  [32, ": gview v"],
  [79, ": globe v sphere v redSolid redWire"],
  [73, ": pencil pencils v | eraser v"],
  [103, ": query levels | analyze ramp sigma convert v"],
];
const row2: [number, string][] = [
  [164, ": plus v line v circle v rect v fillet v spline v prism v"],
  [46, ": drafting dimension v"],
  [165, ": xfA xfB xfC xfD xfE xfF xfG | xfH v xfI xfJ v"],
  [45, ": bulb v bend"],
  [202, ": mesh meshRows surf sweep boxSurf v | trimSurf trimSurf2 wireBox | fan v clipPlane v endmill v"],
];

const YellowBar = styled.div`
  display: flex;
  align-items: center;
  justify-content: space-between;
  width: 600px;
  flex: none;
  padding: 0 6px 0 4px;
  background: #ffffcf;
  border-right: 1px solid #b8b8b8;
  border-bottom: 1px solid #c4c4c4;
`;
const YellowPart = styled.div<{ $w: number }>`
  display: flex;
  align-items: center;
  justify-content: space-between;
  width: ${(p) => p.$w}px;
`;
const AxisButton = styled.button`
  width: 13px;
  height: 13px;
  background: #b9b9b9;
  border: 1px solid #cfcfcf;
  font-family: ${TAHOMA};
  text-decoration: underline;
`;
const Combo = styled.div<{ $w: number; $bg?: string }>`
  display: flex;
  align-items: center;
  width: ${(p) => p.$w}px;
  height: 13px;
  background: ${(p) => p.$bg ?? "#fff"};
  border: 1px solid #d2d2c4;
  padding: 0 1px;
  flex: none;
`;
const ComboInput = styled.input`
  flex: 1;
  min-width: 0;
  height: 9px;
  background: #f0f0f0;
  font-family: "Liberation Sans", sans-serif;
`;
const ComboArrow = styled.button`
  display: grid;
  place-items: center;
  width: 10px;
`;
const PushButton = styled.button`
  width: 27px;
  height: 13px;
  background: #e1e1e1;
  border: 1px solid #b2b2b2;
`;
const SelectBox = styled.label<{ $w: number; $bg: string }>`
  display: grid;
  grid-template-columns: 1fr 10px;
  align-items: center;
  width: ${(p) => p.$w}px;
  height: 13px;
  background: ${(p) => p.$bg};
  border: 1px solid #b2b2b2;
  flex: none;
  svg { grid-area: 1 / 2; pointer-events: none; }
  select { grid-area: 1 / 1 / 2 / 3; appearance: none; padding-left: 2px; min-width: 0; width: 100%; line-height: 10px; outline: none; }
`;

const RibbonBar = styled.div`
  display: flex;
  align-items: center;
  height: 18px;
  flex: none;
  padding-left: 109px;
  background: #f0f0f0;
  border-bottom: 1px solid #d5d0d0;
`;

/* ---------- work area ---------- */

const WorkArea = styled.main`
  display: flex;
  flex: 1;
  min-height: 0;
`;
const LeftBar = styled.aside`
  display: flex;
  flex-direction: column;
  align-self: flex-start;
  justify-content: space-between;
  width: 26px;
  height: 230px;
  flex: none;
  padding: 8px 1px 2px 2px;
  background: #f2f2f2;
  border-right: 1px solid #d8d8d8;
  border-bottom: 1px solid #c4c4c4;
`;
const SideRow = styled.div`
  display: flex;
  align-items: center;
  height: 12px;
  gap: 1px;
`;
const SideRule = styled.hr`
  width: 100%;
  height: 1px;
  margin: 2px 0;
  border: 0;
  background: #b4b4b4;
`;
const leftTools = "extrude revolve sweepBlue loft filletSolid+v - shell boolean+v draft thicken block+| - extract gridBlock foldBlock drawing+| - views+v redBlue+v";

const Manager = styled.section`
  display: flex;
  flex-direction: column;
  width: 175px;
  flex: none;
  padding: 1px 4px 3px 0;
  background: #f0f0f0;
  border-right: 1px solid #8c8c96;
`;
const ManagerHead = styled.header`
  display: flex;
  align-items: center;
  height: 11px;
  flex: none;
  background: #b7b7b7;
  padding-left: 3px;
  font-family: Roboto, ${UI};
  h2 { flex: 1; margin: 0; font: inherit; }
`;
const HeadButton = styled.button`
  display: grid;
  place-items: center;
  width: 13px;
  height: 11px;
  background: #dedede;
  border-left: 1px solid #aaa;
`;
const Tabs = styled.div`
  display: flex;
  align-items: flex-end;
  height: 12px;
  flex: none;
  padding-left: 1px;
  font-family: Roboto, ${UI};
`;
const Tab = styled.button<{ $on?: boolean }>`
  width: ${(p) => (p.$on ? 35 : 23)}px;
  height: ${(p) => (p.$on ? 12 : 10)}px;
  padding-left: 1px;
  background: ${(p) => (p.$on ? "#fcfcfc" : "#f0f0f0")};
  border-right: 1px solid #aaa;
`;
const OpsRow = styled.div<{ $w: number }>`
  display: flex;
  align-items: center;
  height: 19px;
  flex: none;
  margin: 0 8px 0 3px;
  border-top: 1px solid #b5b5b5;
  > div { display: flex; align-items: center; justify-content: space-between; width: ${(p) => p.$w}px; }
`;
const GCode = styled.button`
  font-family: "Liberation Serif", serif;
  font-weight: 700;
  font-size: 8px;
  color: #999;
`;
const TreeBox = styled.div`
  display: grid;
  grid-template: minmax(0, 1fr) 10px / minmax(0, 1fr) 9px;
  flex: 1;
  min-height: 0;
  margin: 3px 0 0 2px;
  background: #fff;
  border: 1px solid #999;
`;
const Tree = styled.ul`
  display: grid;
  grid-auto-rows: minmax(0, 1fr);
  overflow: hidden;
`;
const Row = styled.li<{ $depth: number }>`
  display: flex;
  align-items: center;
  min-width: 0;
  padding-left: ${(p) => 3 + p.$depth * 11}px;
  font-family: ${TAHOMA};
  font-size: 6px;
  line-height: 9px;
  color: #111;
  white-space: pre;
`;
const Guide = styled.span<{ $leaf?: boolean }>`
  display: grid;
  place-items: center;
  align-self: stretch;
  width: 11px;
  flex: none;
  background: linear-gradient(#bdbdbd, #bdbdbd) ${(p) => (p.$leaf ? "2px" : "5px")} 50% / 9px 1px no-repeat,
    linear-gradient(#bdbdbd, #bdbdbd) 2px 0 / 1px 100% no-repeat;
`;
const Expander = styled.button`
  display: grid;
  place-items: center;
  width: 5px;
  height: 5px;
  margin-right: 6px;
  background: #fff;
  border: 1px solid #a5a5a5;
  &::after { content: ""; width: 3px; height: 1px; background: #555; }
`;
const Label = styled.span`
  margin-left: 3px;
`;
const SelectedLabel = styled.span`
  width: 95px;
  height: 9px;
  margin-left: 2px;
  background: #0078d7;
  flex: none;
`;
const VScroll = styled.div`
  display: flex;
  flex-direction: column;
  justify-content: space-between;
  align-items: center;
  background: #f0f0f0;
`;
const VThumb = styled.div`
  width: 100%;
  height: 35%;
  margin: auto 0 1px;
  background: #cdcdcd;
`;
const HScroll = styled.div`
  grid-column: 1 / 3;
  display: flex;
  align-items: center;
  justify-content: space-between;
  padding: 0 12px 0 2px;
  background: #f0f0f0;
`;
const HThumb = styled.div`
  width: 67px;
  height: 8px;
  margin: 0 auto 0 1px;
  background: #cdcdcd;
`;

type TreeRow = { d: number; icon: string; text?: string; exp?: boolean; sel?: boolean };
const op = (n: string, path: string, surf = false, folderIcon = "folderOpen"): TreeRow[] => [
  { d: 2, icon: folderIcon, text: n, exp: true },
  { d: 3, icon: "folder", text: "Parameters" },
  { d: 3, icon: "tool", text: "#1 - 0.3750 BULLNOSE -   .375 BUL" },
  { d: 3, icon: surf ? "geometrySurf" : "geometry", text: surf ? "Geometry -" : "Geometry - (1) chain(s)", exp: surf },
  { d: 3, icon: "toolpath", text: `Toolpath - ${path}` },
];
const rows: TreeRow[] = [
  { d: 3, icon: "ghostIcon", text: "Toolpath - POSTING OFF - GUITAR" },
  { d: 0, icon: "machine", text: "Machine Group-2", exp: true },
  { d: 1, icon: "props", text: "Properties - Fireball", exp: true },
  { d: 1, icon: "group", text: "Toolpath Group-2", exp: true },
  ...op("8 - Pocket (Standard) - [WCS: NEW BO", "11.1K - GUITAR BODY.C"),
  { d: 2, icon: "", sel: true },
  ...op("9 - Pocket (Standard) - [WCS: NEW BO", "35.5K - GUITAR BODY.C"),
  ...op("10 - Surface Finish Constant Scallop - [", "1074.9K - GUITAR BODY", true),
  ...op("11 - Surface Finish Constant Scallop - [", "7163.1K - GUITAR BODY", true, "folderCheck"),
];

const Viewport = styled.section`
  position: relative;
  flex: 1;
  min-width: 0;
  margin: 1px 0;
  background: #00009c;
  overflow: hidden;
  font-weight: 700;
`;
const Scene = styled.svg`
  display: block;
  width: 100%;
  height: 100%;
`;
const ViewCaption = styled.p`
  position: absolute;
  left: 4px;
  bottom: 2px;
  margin: 0;
  display: flex;
  gap: 4px;
  color: #dadaf0;
  white-space: pre;
`;
const ScaleBar = styled.div`
  position: absolute;
  right: 13px;
  bottom: 4px;
  width: 57px;
  height: 20px;
  padding-left: 14px;
  line-height: 9px;
  color: #fff;
  font-weight: 400;
  background: linear-gradient(#8f8fa8, #8f8fa8) 0 10px / 100% 1px no-repeat,
    linear-gradient(#8f8fa8, #8f8fa8) 0 4px / 1px 14px no-repeat,
    linear-gradient(#8f8fa8, #8f8fa8) 100% 4px / 1px 14px no-repeat;
  b { display: block; color: #e63cf0; height: 10px; }
`;
const RightBar = styled.aside`
  display: flex;
  flex-direction: column;
  width: 19px;
  flex: none;
  padding: 7px 3px 0 2px;
  background: #f1f1f1;
  border-left: 2px solid #fff;
  overflow: hidden;
`;
const RightGroup = styled.div<{ $h: number }>`
  display: flex;
  flex-direction: column;
  flex: none;
  height: ${(p) => p.$h}px;
  border-bottom: 1px solid #b9b9b9;
  margin-bottom: 3px;
`;

/* ---------- status bar and taskbar ---------- */

const StatusBar = styled.footer`
  display: flex;
  align-items: center;
  gap: 3px;
  height: 16px;
  flex: none;
  padding-left: 1px;
  background: #f0f0f0;
  overflow: hidden;
`;
const Hint = styled.span`
  flex: 1;
  white-space: nowrap;
`;
const StatusButton = styled.button<{ $w: number; $bg?: string }>`
  width: ${(p) => p.$w}px;
  height: 12px;
  flex: none;
  background: ${(p) => p.$bg ?? "#cdcdcd"};
  white-space: nowrap;
  text-align: center;
`;
const PickButton = styled.button<{ $w: number }>`
  display: grid;
  grid-template-columns: 1fr 9px;
  align-items: center;
  width: ${(p) => p.$w}px;
  height: 13px;
  padding: 0 1px 0 2px;
  flex: none;
  background: #fff;
  border: 1px solid #b2b2b2;
`;
const Stroke = styled.span<{ $t: number }>`
  height: ${(p) => p.$t}px;
  background: #111;
`;
const Taskbar = styled.footer`
  display: flex;
  justify-content: space-between;
  height: 23px;
  flex: none;
  background: linear-gradient(90deg, #17191b, #1f2224 50%, #16181a);
  color: #eee;
`;
const TaskList = styled.div`
  display: grid;
  grid-template-columns: repeat(10, 1fr);
  width: 288px;
`;
const Task = styled.button<{ $open?: boolean; $active?: boolean }>`
  display: grid;
  place-items: center;
  margin: 0 ${(p) => (p.$active ? 0 : 3)}px;
  background: ${(p) => (p.$active ? "#4b4d4f" : "none")};
  border-bottom: 1px solid ${(p) => (p.$open ? "#5ba6e4" : "transparent")};
`;
const Tray = styled.div`
  display: flex;
  align-items: center;
  gap: 8px;
  padding-right: 13px;
`;
const Clock = styled.time`
  width: 36px;
  text-align: center;
  white-space: nowrap;
`;
const Notes = styled.button`
  position: relative;
  display: grid;
  place-items: center;
`;
const Badge = styled.span`
  position: absolute;
  right: -3px;
  bottom: -4px;
  width: 9px;
  height: 9px;
  border-radius: 5px;
  background: #555a5e;
  font-size: 6px;
  line-height: 9px;
`;

const menu: [string, number][] = [
  ["File", 10], ["Edit", 13], ["View", 15], ["Analyze", 24], ["Create", 20], ["Solids", 18], ["Xform", 20],
  ["Machine Type", 43], ["Toolpaths", 31], ["Screen", 20], ["Settings", 26], ["Help", 15],
];

const NeckScene = () => (
  <Scene viewBox="201 97 580 312" preserveAspectRatio="xMidYMid slice" role="img" aria-label="Shaded guitar model">
    <defs>
      <linearGradient id="tube" gradientUnits="userSpaceOnUse" x1="402" y1="330" x2="535" y2="261">
        <stop offset="0" stopColor="#b80000" />
        <stop offset=".12" stopColor="#ee0000" />
        <stop offset=".3" stopColor="#ff0000" />
        <stop offset=".48" stopColor="#ff0e0e" />
        <stop offset=".62" stopColor="#fc0000" />
        <stop offset=".76" stopColor="#d40000" />
        <stop offset=".9" stopColor="#780000" />
        <stop offset="1" stopColor="#260000" />
      </linearGradient>
      <linearGradient id="tip" gradientUnits="userSpaceOnUse" x1="482" y1="228" x2="520" y2="210">
        <stop offset="0" stopColor="#ff0000" />
        <stop offset=".35" stopColor="#f40000" />
        <stop offset="1" stopColor="#6a0000" />
      </linearGradient>
      <linearGradient id="fadeTip" x1="0" y1="0" x2="0" y2="1">
        <stop offset="0" stopColor="#fff" />
        <stop offset=".5" stopColor="#fff" />
        <stop offset="1" stopColor="#000" />
      </linearGradient>
      <mask id="tipMask" maskUnits="userSpaceOnUse" x="460" y="155" width="90" height="130">
        <rect x="460" y="155" width="90" height="130" fill="url(#fadeTip)" />
      </mask>
      <filter id="soft" x="-50%" y="-50%" width="200%" height="200%"><feGaussianBlur stdDeviation="2" /></filter>
      <filter id="wide" x="-50%" y="-50%" width="200%" height="200%"><feGaussianBlur stdDeviation="7" /></filter>
      <clipPath id="body"><path d="M352 202 464 256 488 160Q500 176 510 207L527 253Q546 300 575 350L608 411H453L357 252 347 238 345 202z" /></clipPath>
    </defs>
    <path d="M229 97H490L465 256 360 256 347 238 229 178z" fill="#a20000" />
    <path d="M352 202 464 256 488 160Q500 176 510 207L527 253Q546 300 575 350L608 411H453L357 252 350 240z" fill="url(#tube)" />
    <g clipPath="url(#body)">
      <path d="M350 196Q364 225 372 256L388 300 350 252 338 230z" fill="#980000" filter="url(#soft)" />
    </g>
    <path d="M464 256 488 160Q500 176 510 207L527 253 536 275 480 285z" fill="url(#tip)" mask="url(#tipMask)" />
    <g clipPath="url(#body)">
      <path d="M358 211Q368 223 384 229Q402 236 410 250" fill="none" stroke="#ff8888" strokeWidth="3" filter="url(#soft)" />
      <path d="M392 238Q408 250 424 284" fill="none" stroke="#ff6060" strokeWidth="10" filter="url(#wide)" />
    </g>
    <path d="M402 232 448 264 471 327 425 281 413 254z" fill="#ffff0a" />
    <path d="M439 246 448 264Q467 278 489 284L491 270 492 234Q485 215 476 204L463 256z" fill="#ffff0a" />
    <path d="M352 202 463 190 466 250 462 257z" fill="#a20000" />
    <path d="M489 97H515L497 168 488 160 464 254 462 200z" fill="#720000" />
    <path d="M261 97H489L463 200z" fill="#fb0000" />
    <path d="M347 238 452 411" stroke="#7a48e8" strokeWidth="1" />
    <path d="M226 387 221 379" stroke="#7a1030" />
    <path d="M226 387 235 384" stroke="#1f7a50" />
    <path d="M216 373l4 5M220 373l-4 5" stroke="#8a1030" strokeWidth="1.200" />
    <path d="M238 380l2 3 2-3M240 383v3" fill="none" stroke="#1f8a40" strokeWidth="1.200" />
  </Scene>
);

export default function App() {
  return (
    <Shell>
      <GlobalStyle />
      <TitleBar>
        <Icon name="app" size={11} />
        <Title>{"Mastercam Router X5  C:\\Users\\xrodi\\Desktop\\COMPLETED NEW MODEL RAINIER.MCX-5"}</Title>
        <WindowButton aria-label="Minimize"><Glyph $s={8} viewBox="0 0 8 8"><path d="M1 4.500h6" stroke="#333" /></Glyph></WindowButton>
        <WindowButton aria-label="Restore"><Glyph $s={8} viewBox="0 0 8 8"><path d="M1.500 2.500h4v4h-4zM3 2.500v-1h3.500v4h-1" fill="none" stroke="#333" /></Glyph></WindowButton>
        <WindowButton aria-label="Close"><Glyph $s={8} viewBox="0 0 8 8"><path d="M1 1l6 6M7 1 1 7" stroke="#333" /></Glyph></WindowButton>
      </TitleBar>
      <MenuBar>{menu.map(([m, w]) => <MenuItem key={m} $w={w}>{m}</MenuItem>)}</MenuBar>
      <ToolRow $h={19}>{row1.map(([w, s], i) => <Group key={i} $w={w}><Tools items={split(s)} /></Group>)}</ToolRow>
      <ToolRow $h={17}>{row2.map(([w, s], i) => <Group key={i} $w={w}><Tools items={split(s)} /></Group>)}</ToolRow>
      <ToolRow $h={18}>
        <YellowBar>
          <YellowPart $w={186}>
            {[["X", "-0.22475"], ["Y", "4.85415"], ["Z", "0.0"]].map(([a, v]) => (
              <YellowPart key={a} $w={57}>
                <AxisButton>{a}</AxisButton>
                <Combo $w={42}><ComboInput aria-label={a} defaultValue={v} /><ComboArrow aria-label={`${a} history`}><Chevron /></ComboArrow></Combo>
              </YellowPart>
            ))}
          </YellowPart>
          <YellowPart $w={63}>
            <Tools items={split("fastPoint bang wideTool v")} />
            <ToolButton $framed aria-label="Help"><Icon name="help" /></ToolButton>
          </YellowPart>
          <Rule />
          <YellowPart $w={76}>
            <PushButton>All...</PushButton>
            <PushButton>Only...</PushButton>
            <ToolButton $framed aria-label="Pick"><Icon name="pickCursor" /></ToolButton>
          </YellowPart>
          <SelectBox $w={43} $bg="#e4e4e4"><select aria-label="Selection mode"><option>In</option></select><Chevron /></SelectBox>
          <YellowPart $w={94}><Tools items={split("marquee v arrowGrey hexagon | hexagon hexagon hexagon")} /></YellowPart>
          <YellowPart $w={46}><Tools items={split("halfCube chevronUp")} /><ToolButton $framed aria-label="Verify"><Icon name="verify" /></ToolButton></YellowPart>
          <YellowPart $w={28}><ToolButton $framed aria-label="Stop"><Icon name="forbid" /></ToolButton><Tools items={["disc"]} /></YellowPart>
          <ToolButton $framed aria-label="Help"><Icon name="help" /></ToolButton>
        </YellowBar>
      </ToolRow>
      <RibbonBar>Ribbon Bar</RibbonBar>

      <WorkArea>
        <LeftBar>
          {split(leftTools).map((t, i) => {
            if (t === "-") return <SideRule key={i} />;
            const [name, tail] = t.split("+");
            return <SideRow key={i}><Tools items={tail ? [name, tail] : [name]} /></SideRow>;
          })}
        </LeftBar>
        <Manager>
          <ManagerHead>
            <h2>Operations Manager</h2>
            <HeadButton aria-label="Menu"><Triangle /></HeadButton>
            <HeadButton aria-label="Close panel"><Glyph $s={7} viewBox="0 0 8 8"><path d="M1 1l6 6M7 1 1 7" stroke="#444" /></Glyph></HeadButton>
          </ManagerHead>
          <Tabs><Tab $on>Toolpaths</Tab><Tab>Solids</Tab></Tabs>
          <OpsRow $w={150}>
            <div>
              <Tools items={split("selAll selNone | regen regenX | square backplot")} />
              <GCode>G1</GCode>
              <Tools items={split("postTool | highFeed | question")} />
            </div>
          </OpsRow>
          <OpsRow $w={129}><div><Tools items={split("lock waves ghost | down up insert scrollTo | wavesOff rings")} /></div></OpsRow>
          <TreeBox>
            <Tree>
              {rows.map((r, i) => (
                <Row key={i} $depth={r.d}>
                  <Guide $leaf={!r.exp}>{r.exp && <Expander aria-label="Toggle" />}</Guide>
                  {r.sel ? (
                    <><Glyph $s={9} viewBox="0 0 9 9"><path d="M0 0l9 4.500L0 9z" fill="#e01010" /></Glyph><SelectedLabel /></>
                  ) : (
                    <><Icon name={r.icon} size={9} /><Label>{r.text}</Label></>
                  )}
                </Row>
              ))}
            </Tree>
            <VScroll>
              <Glyph $s={8} viewBox="0 0 8 8"><path d="M1.500 5 4 2.500 6.500 5" fill="none" stroke="#444" /></Glyph>
              <VThumb />
              <Chevron />
            </VScroll>
            <HScroll>
              <Glyph $s={8} viewBox="0 0 8 8"><path d="M5 1.500 2.500 4 5 6.500" fill="none" stroke="#444" /></Glyph>
              <HThumb />
              <Glyph $s={8} viewBox="0 0 8 8"><path d="M3 1.500 5.500 4 3 6.500" fill="none" stroke="#444" /></Glyph>
            </HScroll>
          </TreeBox>
        </Manager>
        <Viewport>
          <NeckScene />
          <ViewCaption><span>Gview:Not Saved</span><span>WCS ':NEW BOTTOM [11]</span><span>T/Cplane ':NEW BOTTOM [11] (TOP)</span></ViewCaption>
          <ScaleBar><b>0.7885</b>Inch</ScaleBar>
        </Viewport>
        <RightBar>
          <RightGroup $h={133}><Tools items={["levels", "colorMap"]} /></RightGroup>
          <RightGroup $h={121}><Tools items={split("rOps rPlus rLine rCircle rSpline rMesh rSolid rWheel rForbid")} /></RightGroup>
          <RightGroup $h={28}><Tools items={["rSwapA", "rSwapB"]} /></RightGroup>
          <Tools items={["palette", "rOps"]} />
        </RightBar>
      </WorkArea>

      <StatusBar>
        <Hint>For help, press Alt+H.</Hint>
        <StatusButton $w={13}>3D</StatusButton>
        <StatusButton $w={25}>Gview</StatusButton>
        <StatusButton $w={22}>Planes</StatusButton>
        <StatusButton $w={6} $bg="none">Z</StatusButton>
        <SelectBox $w={48} $bg="linear-gradient(90deg, #ffff80 36px, #fff 36px)"><select aria-label="Z depth"><option>0.0</option></select><Chevron /></SelectBox>
        <StatusButton $w={19} $bg="#f23ad2">173</StatusButton>
        <DropButton aria-label="Colour"><Triangle /></DropButton>
        <StatusButton $w={20} $bg="#dcdcdc">Level</StatusButton>
        <SelectBox $w={58} $bg="#fff"><select aria-label="Level"><option>6000 : New Mc</option></select><Chevron /></SelectBox>
        <StatusButton $w={34}>Attributes</StatusButton>
        <PickButton $w={22} aria-label="Point style"><Glyph $s={7} viewBox="0 0 8 8"><path d="M1 7l5-5M2 4h4M4 2v4" stroke="#222" /></Glyph><Chevron /></PickButton>
        <PickButton $w={36} aria-label="Line style"><Stroke $t={2} /><Chevron /></PickButton>
        <PickButton $w={39} aria-label="Line width"><Stroke $t={1} /><Chevron /></PickButton>
        <StatusButton $w={23}>WCS</StatusButton>
        <StatusButton $w={31}>Groups</StatusButton>
        <StatusButton $w={7}>!</StatusButton>
        <StatusButton $w={5}>?</StatusButton>
      </StatusBar>

      <Taskbar>
        <TaskList>
          {split("windows paint notepad redBlocks swirl letterN space books ie x5").map((n, i) => (
            <Task key={n} $open={i > 3} $active={i === 9} aria-label={n}><Icon name={n} size={i === 0 ? 11 : 14} /></Task>
          ))}
        </TaskList>
        <Tray>
          <Icon name="helpBadge" size={14} />
          <Icon name="caret" size={10} />
          <Icon name="battery" size={11} />
          <Icon name="mute" size={11} />
          <Icon name="wifi" size={11} />
          <Icon name="keyboard" size={14} />
          <Clock>10:06 AM<br />7/17/2017</Clock>
          <Notes aria-label="Notifications"><Icon name="note" size={11} /><Badge>3</Badge></Notes>
        </Tray>
      </Taskbar>
    </Shell>
  );
}
